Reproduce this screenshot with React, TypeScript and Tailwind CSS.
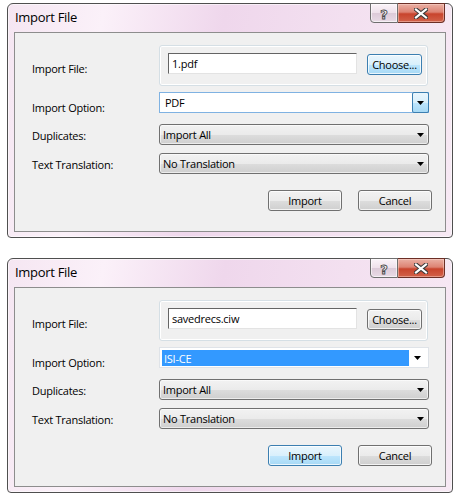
import React from "react";

const txt = "[font-family:'Open_Sans','Noto_Sans',sans-serif] text-[11px] leading-[15px] tracking-[-0.25px] text-black";
const grayGrad = "bg-[linear-gradient(to_bottom,#f2f2f2_0%,#ebebeb_50%,#dddddd_51%,#cfcfcf_100%)]";
const blueGrad = "bg-[linear-gradient(to_bottom,#eaf6fd_0%,#d9f0fc_50%,#bee6fd_51%,#a7d9f5_100%)]";

function Arrow() {
  return (
    <svg width="7" height="4" viewBox="0 0 7 4" className="block">
      <polygon points="0,0 7,0 3.5,4" fill="#000" />
    </svg>
  );
}

function Btn({ label, focused, w }: { label: string; focused?: boolean; w: string }) {
  return (
    <div
      className={`${w} h-[21px] rounded-[3px] border flex items-center justify-center ${txt} shadow-[inset_0_0_0_1px_rgba(255,255,255,0.75)] ${
        focused ? `border-[#3c7fb1] ${blueGrad}` : `border-[#707070] ${grayGrad}`
      }`}
    >
      {label}
    </div>
  );
}

function GrayCombo({ value }: { value: string }) {
  return (
    <div
      className={`w-[270px] h-[21px] rounded-[3px] border border-[#707070] ${grayGrad} shadow-[inset_0_0_0_1px_rgba(255,255,255,0.6)] flex items-center justify-between pl-[3px] pr-[4px] ${txt}`}
    >
      <span>{value}</span>
      <Arrow />
    </div>
  );
}

function HelpGlyph() {
  return (
    <svg width="10" height="13" viewBox="0 0 10 13">
      <text
        x="5"
        y="11.5"
        textAnchor="middle"
        fontFamily="'DejaVu Sans', sans-serif"
        fontWeight="bold"
        fontSize="13"
        fill="#ffffff"
        stroke="#4a4a4a"
        strokeWidth="0.9"
      >
        ?
      </text>
    </svg>
  );
}

function CloseGlyph() {
  return (
    <svg width="14" height="11" viewBox="0 0 14 11">
      <path d="M2 1.5 L12 9.5 M12 1.5 L2 9.5" stroke="#3a3a3a" strokeWidth="4.2" strokeLinecap="square" />
      <path d="M2 1.5 L12 9.5 M12 1.5 L2 9.5" stroke="#ffffff" strokeWidth="2.2" strokeLinecap="square" />
    </svg>
  );
}

function Window({ second }: { second?: boolean }) {
  return (
    <div className="relative w-[446px] h-[235px] shrink-0 border border-[#4f4f4f] rounded-t-[6px] rounded-b-[4px] bg-[linear-gradient(100deg,#f5e6f2_0%,#fbf1f9_20%,#efd7ec_45%,#f3e0f0_70%,#f7e9f4_100%)] shadow-[inset_0_0_0_1px_rgba(255,255,255,0.55)] flex flex-col">
      {/* caption buttons */}
      <div className="absolute top-[-1px] right-[7px] flex">
        <div className="w-[28px] h-[20px] border border-[#6f6f6f] rounded-bl-[4px] bg-[linear-gradient(to_bottom,#fbf4f9_0%,#eee0ea_50%,#dccad8_51%,#e9dbe6_100%)] shadow-[inset_0_0_0_1px_rgba(255,255,255,0.6)] flex items-center justify-center">
          <HelpGlyph />
        </div>
        <div className="w-[47px] h-[20px] border border-[#6b2f26] border-l-0 rounded-br-[4px] bg-[linear-gradient(to_bottom,#eab0a4_0%,#dd8373_45%,#c8442d_55%,#d2624a_100%)] shadow-[inset_0_0_0_1px_rgba(255,220,210,0.45)] flex items-center justify-center">
          <CloseGlyph />
        </div>
      </div>

      <div className="h-[28px] pl-[7px] pt-[4px] [font-family:'Open_Sans','Noto_Sans',sans-serif] text-[13px] leading-[18px] tracking-[-0.3px] text-black">
        Import File
      </div>

      <div className="mx-[6px] h-[200px] border border-[#8d8d8d] bg-[#f0f0f0] flex flex-col pt-[12px] pl-[17px]">
        {/* Row 1 */}
        <div className="flex h-[41px]">
          <div className={`w-[127px] pt-[16px] ${txt}`}>Import File:</div>
          <div className="w-[269px] h-[41px] rounded-[3px] border border-[#d5dfe5] shadow-[inset_0_0_0_1px_#ffffff] flex items-start pl-[8px] pt-[7px]">
            <div
              className={`w-[189px] h-[21px] bg-white border border-t-[#646464] border-l-[#646464] border-r-[#e3e3e3] border-b-[#e3e3e3] flex items-center pl-[3px] ${txt}`}
            >
              {second ? "savedrecs.ciw" : "1.pdf"}
            </div>
            <div className="ml-[10px] mt-[1px]">
              <Btn label="Choose..." focused={!second} w="w-[55px]" />
            </div>
          </div>
        </div>

        {/* Row 2 */}
        <div className="flex h-[21px] mt-[6px]">
          <div className={`w-[127px] pt-[8px] ${txt}`}>Import Option:</div>
          {second ? (
            <div className="relative w-[270px] h-[21px] bg-white border border-[#dfe3e8] flex">
              <div className={`ml-[2px] mt-[2px] w-[247px] h-[16px] bg-[#3399ff] flex items-center pl-[2px] ${txt} text-white`}>
                ISI-CE
              </div>
              <div className="flex-1 flex items-center justify-center pr-[2px]">
                <Arrow />
              </div>
            </div>
          ) : (
            <div className="w-[270px] h-[21px] bg-white border border-[#7fb2e2] flex items-stretch">
              <div className={`flex-1 flex items-center pl-[5px] ${txt}`}>PDF</div>
              <div className={`w-[17px] -my-[1px] -mr-[1px] border border-[#3c7fb1] rounded-[2px] ${blueGrad} flex items-center justify-center`}>
                <Arrow />
              </div>
            </div>
          )}
        </div>

        {/* Row 3 */}
        <div className="flex h-[21px] mt-[11px]">
          <div className={`w-[127px] pt-[4px] ${txt}`}>Duplicates:</div>
          <GrayCombo value="Import All" />
        </div>

        {/* Row 4 */}
        <div className="flex h-[21px] mt-[8px]">
          <div className={`w-[127px] pt-[4px] ${txt}`}>Text Translation:</div>
          <GrayCombo value="No Translation" />
        </div>

        {/* Buttons */}
        <div className="flex justify-end gap-[16px] pr-[13px] mt-[16px]">
          <Btn label="Import" focused={second} w="w-[74px]" />
          <Btn label="Cancel" w="w-[74px]" />
        </div>
      </div>
    </div>
  );
}

export default function App() {
  return (
    <div className="w-[460px] h-[493px] bg-white flex flex-col pt-[3px] pl-[7px] gap-[20px] overflow-hidden">
      <Window />
      <Window second />
    </div>
  );
}
